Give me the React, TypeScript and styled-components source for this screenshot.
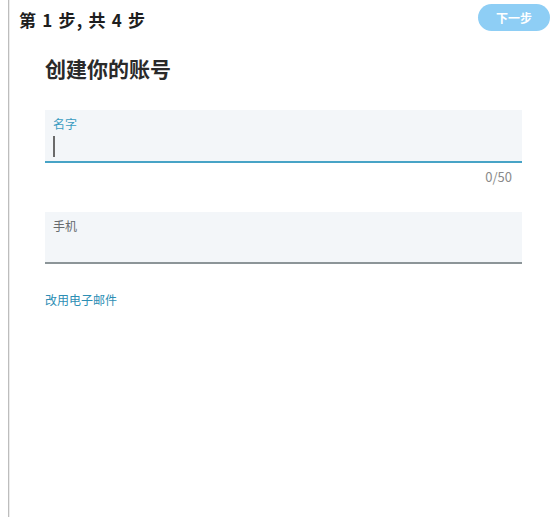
import React from "react";
import styled, { createGlobalStyle } from "styled-components";

const Global = createGlobalStyle`
  html, body { margin: 0; padding: 0; background: #ffffff; }
  body { font-family: "Noto Sans CJK SC", "Noto Sans", sans-serif; }
  * { box-sizing: border-box; }
`;

const Page = styled.div`
  margin-left: 8px;
  height: 517px;
  border-left: 1px solid #bdbdbd;
  box-shadow: inset 1px 0 0 #ececec;
  display: flex;
  flex-direction: column;
`;

const Header = styled.header`
  display: flex;
  justify-content: space-between;
  align-items: flex-start;
  padding: 4px 10px 0 10px;
`;

const StepText = styled.div`
  margin-top: 3px;
  font-size: 17px;
  line-height: 26px;
  font-weight: 700;
  color: #1e1e1e;
  letter-spacing: 1.2px;
`;

const NextButton = styled.button`
  width: 72px;
  height: 27px;
  border: none;
  border-radius: 14px;
  background: #8ecef5;
  color: #ffffff;
  font-family: inherit;
  font-size: 12px;
  font-weight: 700;
  padding: 0;
`;

const Content = styled.main`
  display: flex;
  flex-direction: column;
  padding: 0 38px 0 36px;
`;

const Title = styled.h1`
  margin: 20px 0 0 0;
  font-size: 21px;
  line-height: 30px;
  font-weight: 700;
  color: #2a2a2a;
`;

const Field = styled.div<{ $active?: boolean; $h: number }>`
  height: ${(p) => p.$h}px;
  background: #f3f6f9;
  border-bottom: 2px solid ${(p) => (p.$active ? "#47a3c6" : "#8c9598")};
  padding: 5px 8px 0 8px;
  display: flex;
  flex-direction: column;
`;

const Label = styled.span<{ $active?: boolean }>`
  font-size: 12px;
  line-height: 18px;
  color: ${(p) => (p.$active ? "#3a9cc1" : "#666b6e")};
`;

const Cursor = styled.span`
  margin-top: 3px;
  width: 2px;
  height: 21px;
  background: #6a6a6a;
`;

const Counter = styled.div`
  align-self: flex-end;
  margin: 5px 10px 0 0;
  font-size: 13px;
  line-height: 18px;
  color: #8a8a8a;
`;

const NameBlock = styled.div`
  margin-top: 27px;
  display: flex;
  flex-direction: column;
`;

const PhoneBlock = styled.div`
  margin-top: 26px;
`;

const Link = styled.a`
  margin-top: 27px;
  font-size: 12px;
  line-height: 18px;
  color: #2d8eb4;
  text-decoration: none;
`;

export default function App() {
  return (
    <>
      <Global />
      <Page>
        <Header>
          <StepText>第 1 步, 共 4 步</StepText>
          <NextButton>下一步</NextButton>
        </Header>
        <Content>
          <Title>创建你的账号</Title>
          <NameBlock>
            <Field $active $h={53}>
              <Label $active>名字</Label>
              <Cursor />
            </Field>
            <Counter>0/50</Counter>
          </NameBlock>
          <PhoneBlock>
            <Field $h={52}>
              <Label>手机</Label>
            </Field>
          </PhoneBlock>
          <Link href="#">改用电子邮件</Link>
        </Content>
      </Page>
    </>
  );
}
